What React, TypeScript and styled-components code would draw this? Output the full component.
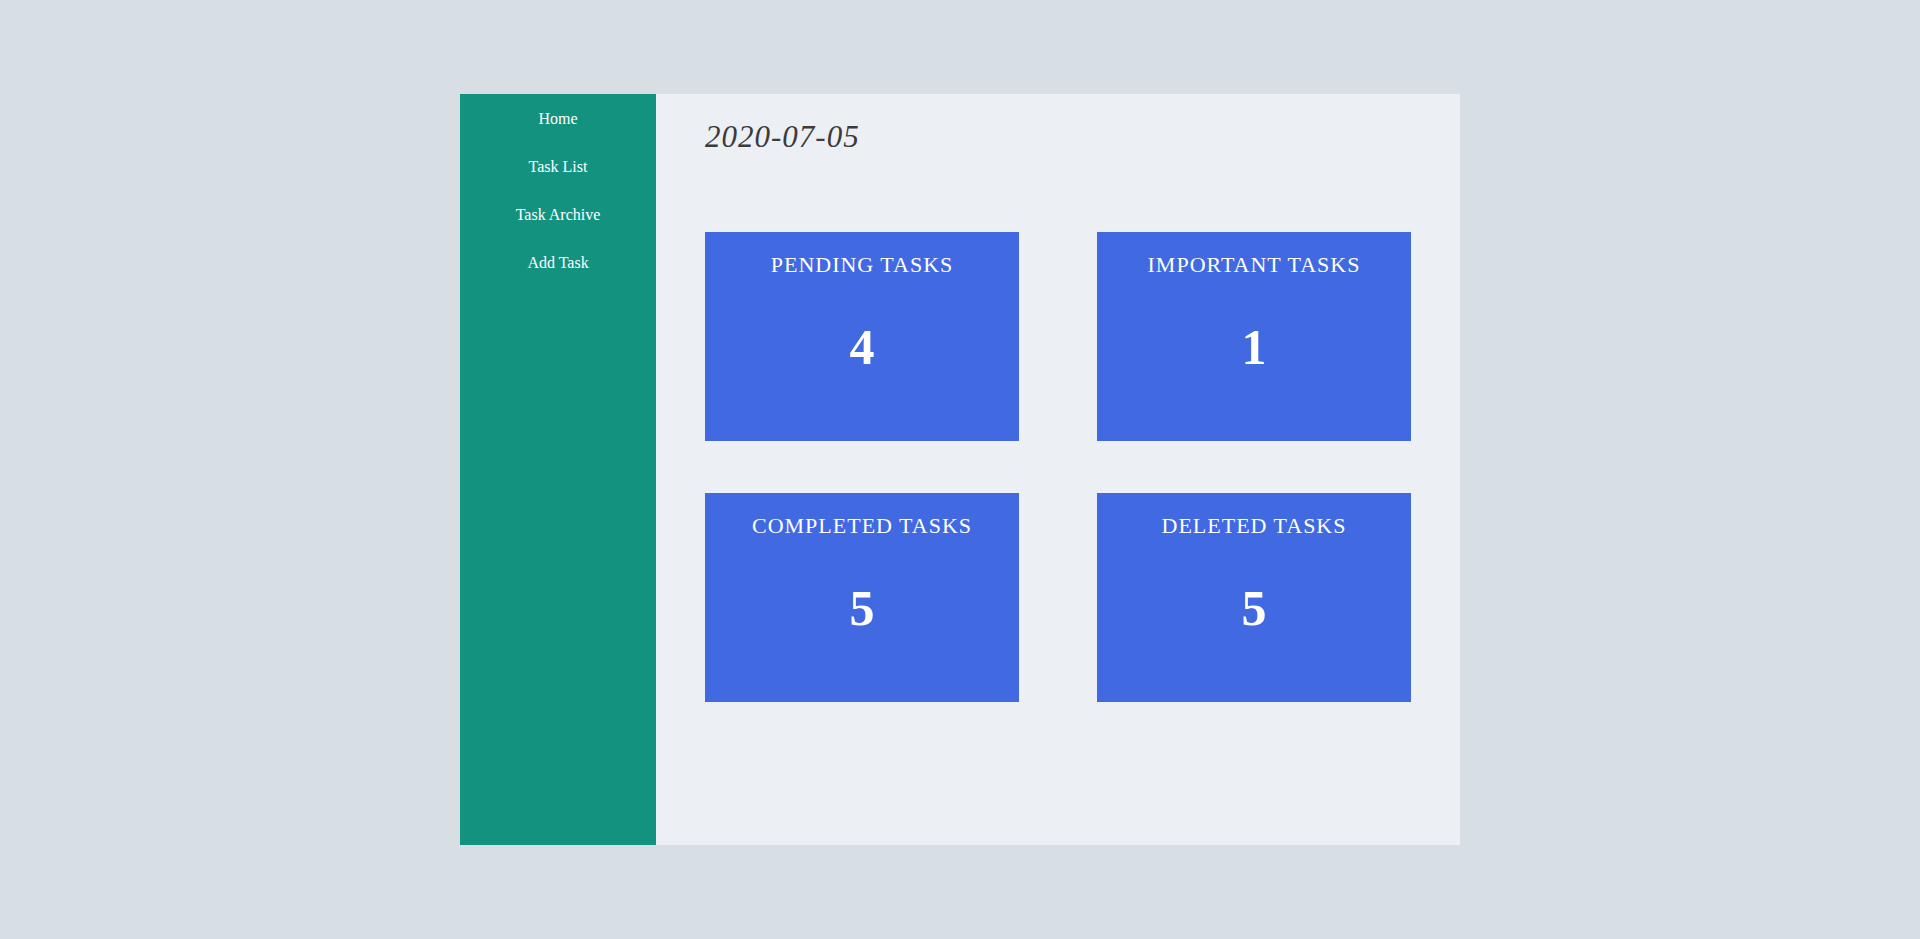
import React from "react";
import styled, { createGlobalStyle } from "styled-components";

const GlobalStyle = createGlobalStyle`
  html, body {
    margin: 0;
    padding: 0;
    background: #d7dee4;
    font-family: "Liberation Serif", "Times New Roman", serif;
  }
  * { box-sizing: border-box; }
`;

const Page = styled.div`
  width: 100%;
  min-height: 939px;
  background: #d7dee4;
  padding-top: 94px;
  display: flex;
  justify-content: center;
  align-items: flex-start;
`;

const Frame = styled.div`
  width: 1000px;
  height: 751px;
  display: flex;
`;

const Sidebar = styled.nav`
  width: 196px;
  flex-shrink: 0;
  background: #13927f;
  display: flex;
  flex-direction: column;
  padding-top: 1px;
`;

const NavLink = styled.a`
  display: block;
  padding: 15px 0;
  font-size: 16px;
  line-height: 18px;
  color: #ffffff;
  text-align: center;
  text-decoration: none;
  cursor: pointer;
`;

const Main = styled.main`
  flex: 1;
  background: #ecf0f5;
  padding: 24px 49px;
`;

const DateTitle = styled.div`
  font-size: 31px;
  line-height: 37px;
  font-style: italic;
  letter-spacing: 1px;
  color: #3b3b3b;
`;

const Grid = styled.div`
  margin-top: 77px;
  display: grid;
  grid-template-columns: 314px 314px;
  column-gap: 78px;
  row-gap: 52px;
`;

const Card = styled.div`
  height: 209px;
  background: #4169e1;
  color: #ffffff;
  text-align: center;
  padding-top: 20px;
`;

const CardTitle = styled.div`
  font-size: 22px;
  line-height: 25px;
  letter-spacing: 1px;
  text-transform: uppercase;
`;

const CardCount = styled.div`
  margin-top: 41px;
  font-size: 50px;
  line-height: 58px;
  font-weight: bold;
`;

const navItems = ["Home", "Task List", "Task Archive", "Add Task"];

const stats = [
  { title: "Pending Tasks", count: 4 },
  { title: "Important Tasks", count: 1 },
  { title: "Completed Tasks", count: 5 },
  { title: "Deleted Tasks", count: 5 },
];

export default function App() {
  return (
    <>
      <GlobalStyle />
      <Page>
        <Frame>
          <Sidebar>
            {navItems.map((n) => (
              <NavLink key={n}>{n}</NavLink>
            ))}
          </Sidebar>
          <Main>
            <DateTitle>2020-07-05</DateTitle>
            <Grid>
              {stats.map((s) => (
                <Card key={s.title}>
                  <CardTitle>{s.title}</CardTitle>
                  <CardCount>{s.count}</CardCount>
                </Card>
              ))}
            </Grid>
          </Main>
        </Frame>
      </Page>
    </>
  );
}
